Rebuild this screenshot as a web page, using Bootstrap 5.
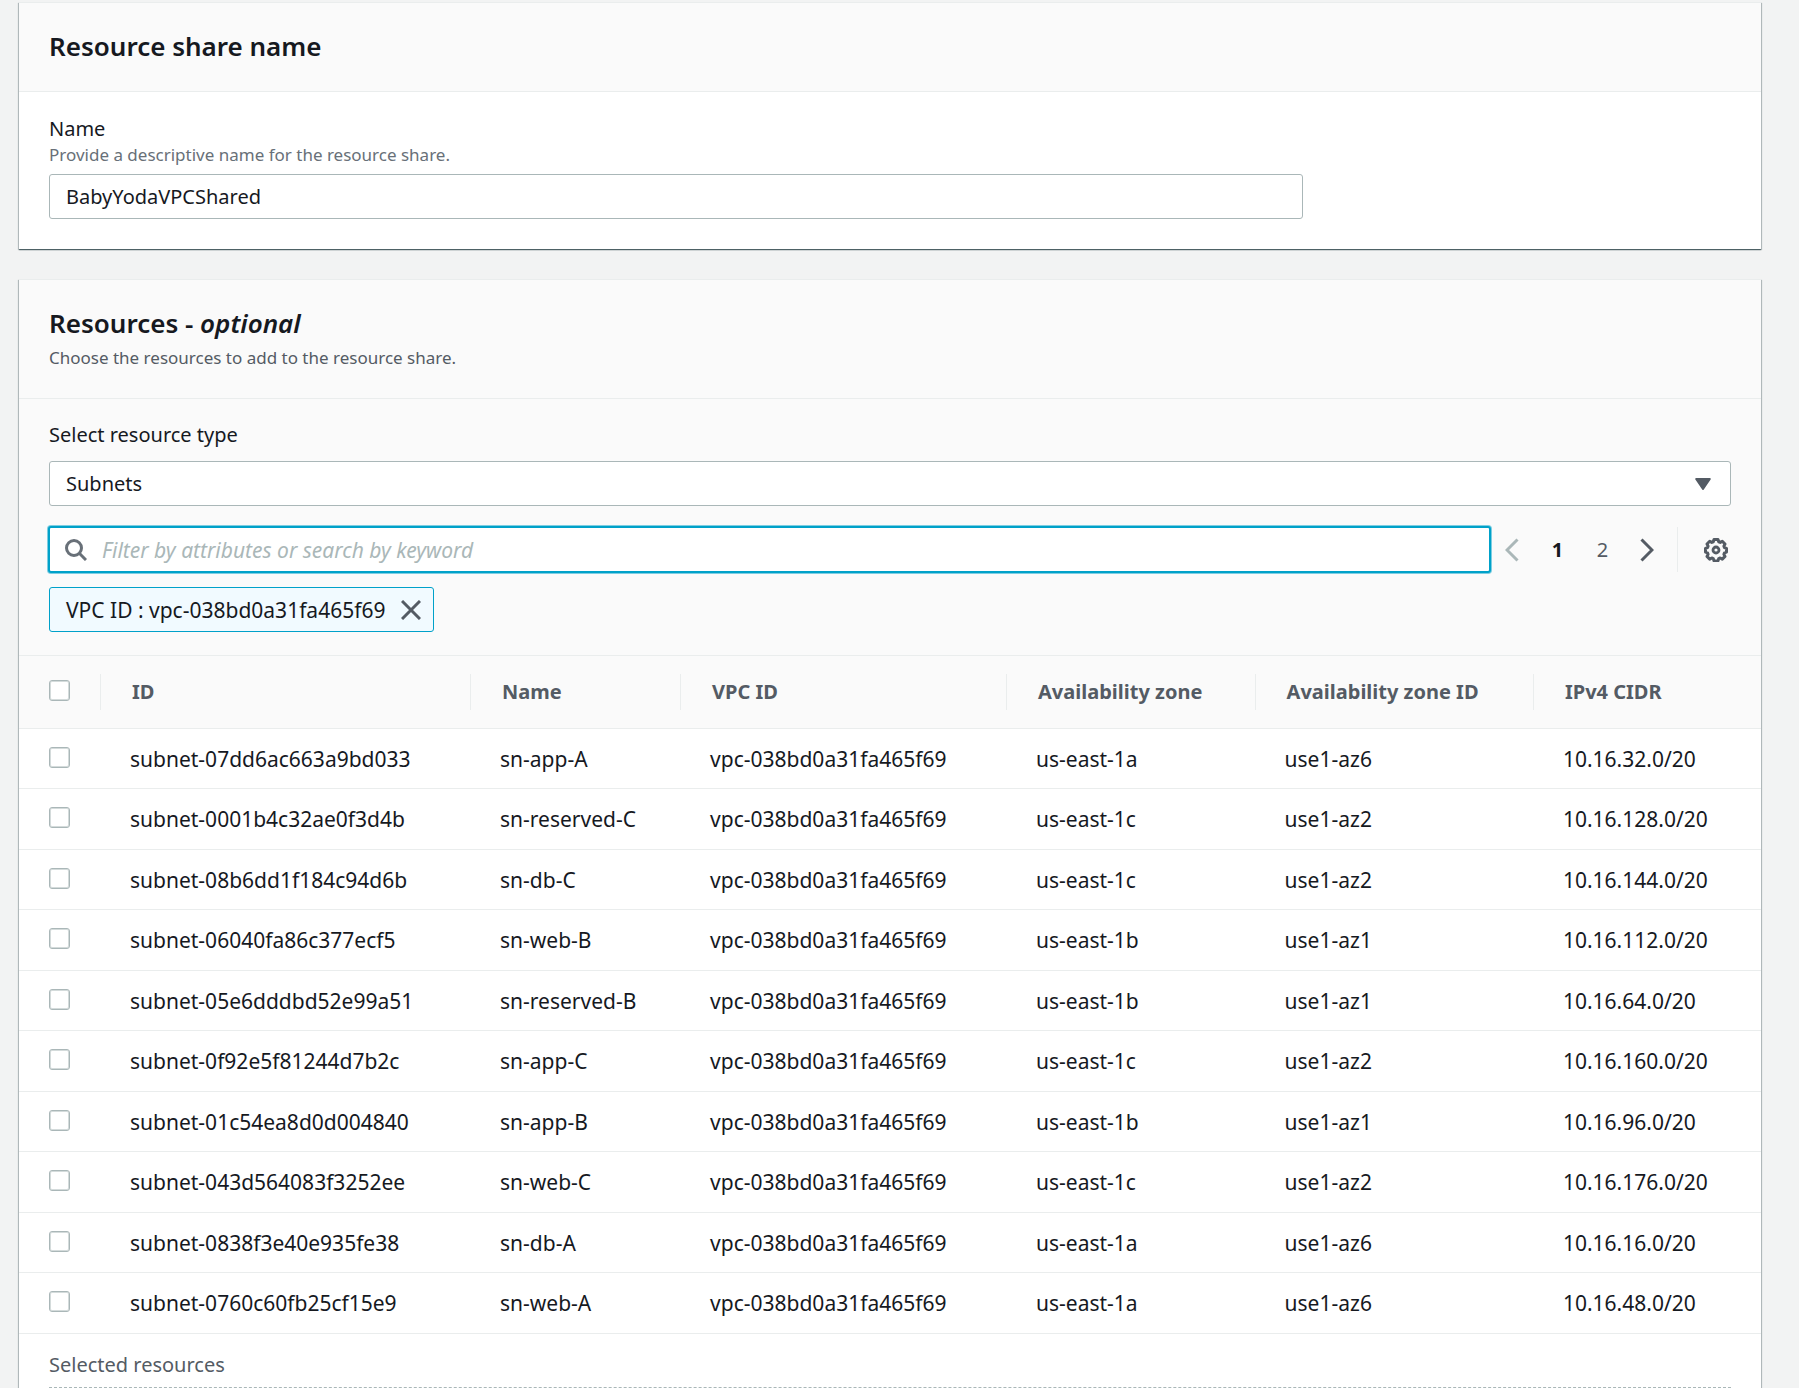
<!DOCTYPE html>
<html lang="en">
<head>
<meta charset="utf-8">
<meta name="viewport" content="width=device-width, initial-scale=1">
<title>Create resource share</title>
<link href="https://cdn.jsdelivr.net/npm/bootstrap@5.3.0/dist/css/bootstrap.min.css" rel="stylesheet">
<style>
  body { background: #f2f3f3; color: #16191f; font-family: "Noto Sans", "Open Sans", sans-serif; font-size: 20px; line-height: 30px; }
  .page { min-height: 100vh; padding: 2px 38px 0 19px; gap: 30px; }
  .panel { background: #fff; border-top: 1px solid #eaeded; box-shadow: 0 1px 1px rgba(0,28,36,.5), 1px 1px 1px rgba(0,28,36,.2), -1px 1px 1px rgba(0,28,36,.2); }
  .panel-head { background: #fafafa; border-bottom: 1px solid #eaeded; padding: 27px 30px 29px; }
  .panel-head h2 { font-size: 26px; line-height: 32px; font-weight: 600; margin: 0; }
  .panel-head p { font-size: 17px; line-height: 30px; color: #545b64; margin: 4px 0 0; }
  .panel-head.described { padding-bottom: 25px; }
  .name-body { padding: 22px 30px 30px; }
  .hint { font-size: 17px; line-height: 22px; color: #687078; }
  .name-row { max-width: 1254px; }
  .field, .field:focus { height: 45px; border: 1px solid #aab7b8; border-radius: 3px; padding: 0 16px; font-size: 20px; line-height: 43px; color: #16191f; background-color: #fff; box-shadow: none; }
  .picker { background-image: url("data:image/svg+xml,%3Csvg xmlns='http://www.w3.org/2000/svg' viewBox='0 0 16 12'%3E%3Cpath d='M1.2 1h13.6L8 11z' fill='%23545b64' stroke='%23545b64' stroke-width='2' stroke-linejoin='round'/%3E%3C/svg%3E"); background-size: 16px 12px; background-position: right 19px center; }
  .tools { background: #fafafa; padding: 21px 30px 23px; }
  .tools > label { margin-bottom: 11px; }
  .filter-row { margin: 21px 0 15px; }
  .search { height: 45px; background: #fff; border-radius: 2px; outline: 2px solid #00a1c9; outline-offset: -1px; box-shadow: 0 0 0 2px rgba(0,161,201,.5); padding-left: 16px; }
  .search input { border: 0; outline: 0; background: transparent; color: #16191f; font-size: 21px; min-width: 0; padding: 0 7px; }
  .search input::placeholder { color: #aab7b8; font-style: italic; opacity: 1; }
  .bare { border: 0; background: transparent; padding: 0; color: #545b64; display: flex; align-items: center; justify-content: center; }
  .pager { margin-left: 10px; }
  .pager .bare { width: 45px; height: 45px; }
  .pager .step { width: 23px; }
  .pager .bare.step:disabled { color: #aab7b8; }
  .pager .current { color: #16191f; font-weight: 700; }
  .pager ul { margin: 0 10px 0 12px; padding: 0; list-style: none; }
  .settings { border-left: 1px solid #eaeded; margin-left: 19px; padding: 0 3px 0 26px; height: 45px; }
  .token { height: 45px; border: 1px solid #00a1c9; border-radius: 3px; background: #f1faff; padding: 0 12px 0 16px; gap: 16px; font-size: 21px; }
  .grid-table { table-layout: fixed; width: 100%; margin: 0; border-collapse: separate; border-spacing: 0; }
  .grid-table th { height: 74px; background: #fafafa; border-top: 1px solid #eaeded; border-bottom: 1px solid #eaeded; color: #545b64; font-weight: 700; padding: 0; vertical-align: middle; }
  .grid-table th > div { height: 36px; line-height: 36px; padding-left: 31px; border-left: 1px solid #eaeded; white-space: nowrap; }
  .grid-table td { height: 60px; border-bottom: 1px solid #eaeded; padding: 0 0 0 30px; vertical-align: middle; white-space: nowrap; font-size: 21px; }
  .grid-table tr:nth-child(even) td { height: 61px; }
  .grid-table .pick { padding-left: 30px; }
  .grid-table .form-check-input { display: block; width: 21px; height: 21px; margin: 0 0 3px; border: 1px solid #aab7b8; border-radius: 3px; background-color: #fff; box-shadow: inset 0 0 0 1px rgba(170,183,184,.5); }
  .chosen { padding: 16px 30px 0; color: #545b64; }
  .chosen h3 { font-size: 20px; line-height: 30px; font-weight: 400; margin: 0; padding-bottom: 7px; border-bottom: 1px dashed #aab7b8; }
</style>
</head>
<body>
<main class="page d-flex flex-column">
  <section class="panel">
    <div class="panel-head"><h2>Resource share name</h2></div>
    <div class="name-body">
      <label class="d-block" for="share-name">Name</label>
      <div class="hint mb-2" id="name-hint">Provide a descriptive name for the resource share.</div>
      <div class="name-row"><input class="form-control field" id="share-name" type="text" value="BabyYodaVPCShared" aria-describedby="name-hint"></div>
    </div>
  </section>

  <section class="panel flex-grow-1">
    <div class="panel-head described">
      <h2>Resources - <em>optional</em></h2>
      <p>Choose the resources to add to the resource share.</p>
    </div>
    <div class="tools">
      <label class="d-block" for="resource-type">Select resource type</label>
      <select class="form-select field picker" id="resource-type"><option>Subnets</option></select>
      <div class="filter-row d-flex align-items-center">
        <div class="search d-flex align-items-center flex-grow-1">
          <svg width="22" height="22" viewBox="0 0 22 22" fill="none" stroke="#687078" stroke-width="3" aria-hidden="true"><circle cx="9" cy="9" r="7.5"/><path d="M14.3 14.3 21 21"/></svg>
          <input class="flex-grow-1 ms-2" type="search" placeholder="Filter by attributes or search by keyword" aria-label="Filter resources">
        </div>
        <nav class="pager d-flex align-items-center" aria-label="Table pages">
          <button class="bare step" type="button" disabled aria-label="Previous page"><svg width="14" height="24" viewBox="0 0 14 24" fill="none" stroke="currentColor" stroke-width="3"><path d="M12.5 1.5 2 12l10.500 10.500"/></svg></button>
          <ul class="d-flex">
            <li><button class="bare current" type="button" aria-current="page">1</button></li>
            <li><button class="bare" type="button">2</button></li>
          </ul>
          <button class="bare step" type="button" aria-label="Next page"><svg width="14" height="24" viewBox="0 0 14 24" fill="none" stroke="currentColor" stroke-width="3"><path d="M1.500 1.500 12 12 1.500 22.500"/></svg></button>
        </nav>
        <div class="settings d-flex align-items-center">
          <button class="bare" type="button" aria-label="Preferences"><svg width="24" height="24" viewBox="0 0 24 24" fill="none" stroke="currentColor" stroke-width="3" stroke-linejoin="round"><path d="M10 1.500h4l.7 2.300 1.500.6 2.100-1.100 2.700 2.700-1.100 2.100.6 1.500 2 .7v3.800l-2 .7-.6 1.500 1.100 2.100-2.700 2.700-2.100-1.100-1.500.6-.7 2.300h-4l-.7-2.300-1.500-.6-2.100 1.100L3 18.400l1.100-2.100-.6-1.500-2-.7v-3.800l2-.7.6-1.500L3 6l2.700-2.700 2.100 1.100 1.500-.6z"/><circle cx="12" cy="12" r="3" stroke-width="2.800"/></svg></button>
        </div>
      </div>
      <div class="d-flex">
        <div class="token d-flex align-items-center">
          <span>VPC ID : vpc-038bd0a31fa465f69</span>
          <button class="bare" type="button" aria-label="Remove filter"><svg width="20" height="20" viewBox="0 0 20 20" fill="none" stroke="currentColor" stroke-width="3"><path d="m1 1 18 18M19 1 1 19"/></svg></button>
        </div>
      </div>
    </div>
    <table class="grid-table">
      <colgroup><col style="width:4.650%"><col style="width:21.240%"><col style="width:12.060%"><col style="width:18.710%"><col style="width:14.270%"><col style="width:15.980%"><col></colgroup>
      <thead>
        <tr>
          <th class="pick" scope="col"><input class="form-check-input" type="checkbox" aria-label="Select all"></th>
          <th scope="col"><div>ID</div></th>
          <th scope="col"><div>Name</div></th>
          <th scope="col"><div>VPC ID</div></th>
          <th scope="col"><div>Availability zone</div></th>
          <th scope="col"><div>Availability zone ID</div></th>
          <th scope="col"><div>IPv4 CIDR</div></th>
        </tr>
      </thead>
      <tbody>
        <tr><td class="pick"><input class="form-check-input" type="checkbox" aria-label="Select sn-app-A"></td><td>subnet-07dd6ac663a9bd033</td><td>sn-app-A</td><td>vpc-038bd0a31fa465f69</td><td>us-east-1a</td><td>use1-az6</td><td>10.16.32.0/20</td></tr>
        <tr><td class="pick"><input class="form-check-input" type="checkbox" aria-label="Select sn-reserved-C"></td><td>subnet-0001b4c32ae0f3d4b</td><td>sn-reserved-C</td><td>vpc-038bd0a31fa465f69</td><td>us-east-1c</td><td>use1-az2</td><td>10.16.128.0/20</td></tr>
        <tr><td class="pick"><input class="form-check-input" type="checkbox" aria-label="Select sn-db-C"></td><td>subnet-08b6dd1f184c94d6b</td><td>sn-db-C</td><td>vpc-038bd0a31fa465f69</td><td>us-east-1c</td><td>use1-az2</td><td>10.16.144.0/20</td></tr>
        <tr><td class="pick"><input class="form-check-input" type="checkbox" aria-label="Select sn-web-B"></td><td>subnet-06040fa86c377ecf5</td><td>sn-web-B</td><td>vpc-038bd0a31fa465f69</td><td>us-east-1b</td><td>use1-az1</td><td>10.16.112.0/20</td></tr>
        <tr><td class="pick"><input class="form-check-input" type="checkbox" aria-label="Select sn-reserved-B"></td><td>subnet-05e6dddbd52e99a51</td><td>sn-reserved-B</td><td>vpc-038bd0a31fa465f69</td><td>us-east-1b</td><td>use1-az1</td><td>10.16.64.0/20</td></tr>
        <tr><td class="pick"><input class="form-check-input" type="checkbox" aria-label="Select sn-app-C"></td><td>subnet-0f92e5f81244d7b2c</td><td>sn-app-C</td><td>vpc-038bd0a31fa465f69</td><td>us-east-1c</td><td>use1-az2</td><td>10.16.160.0/20</td></tr>
        <tr><td class="pick"><input class="form-check-input" type="checkbox" aria-label="Select sn-app-B"></td><td>subnet-01c54ea8d0d004840</td><td>sn-app-B</td><td>vpc-038bd0a31fa465f69</td><td>us-east-1b</td><td>use1-az1</td><td>10.16.96.0/20</td></tr>
        <tr><td class="pick"><input class="form-check-input" type="checkbox" aria-label="Select sn-web-C"></td><td>subnet-043d564083f3252ee</td><td>sn-web-C</td><td>vpc-038bd0a31fa465f69</td><td>us-east-1c</td><td>use1-az2</td><td>10.16.176.0/20</td></tr>
        <tr><td class="pick"><input class="form-check-input" type="checkbox" aria-label="Select sn-db-A"></td><td>subnet-0838f3e40e935fe38</td><td>sn-db-A</td><td>vpc-038bd0a31fa465f69</td><td>us-east-1a</td><td>use1-az6</td><td>10.16.16.0/20</td></tr>
        <tr><td class="pick"><input class="form-check-input" type="checkbox" aria-label="Select sn-web-A"></td><td>subnet-0760c60fb25cf15e9</td><td>sn-web-A</td><td>vpc-038bd0a31fa465f69</td><td>us-east-1a</td><td>use1-az6</td><td>10.16.48.0/20</td></tr>
      </tbody>
    </table>
    <div class="chosen"><h3>Selected resources</h3></div>
  </section>
</main>
<script src="https://cdn.jsdelivr.net/npm/bootstrap@5.3.0/dist/js/bootstrap.bundle.min.js"></script>
</body>
</html>
